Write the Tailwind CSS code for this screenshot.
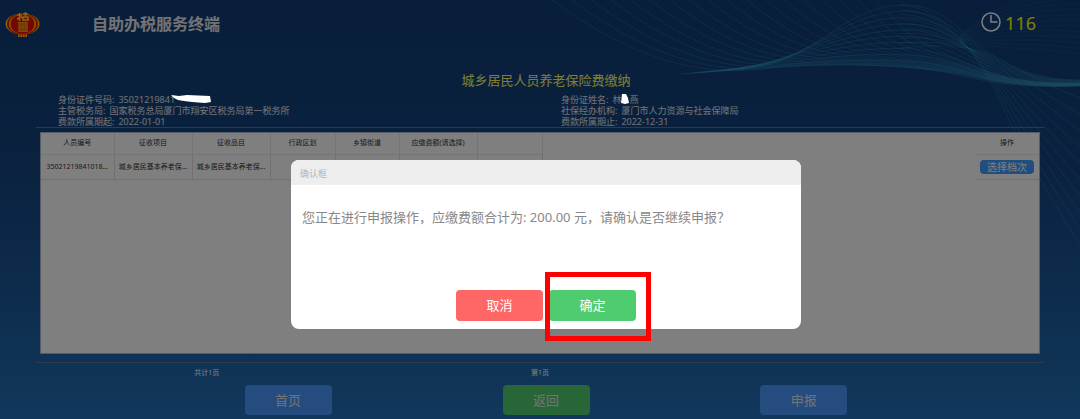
<!DOCTYPE html>
<html lang="zh-CN">
<head>
    <meta charset="UTF-8">
    <meta name="viewport" content="width=device-width, initial-scale=1.0">
    <title>自助办税服务终端</title>
    <script src="https://cdn.jsdelivr.net/npm/@tailwindcss/browser@4"></script>
</head>
<body class="relative min-h-screen flex flex-col overflow-x-hidden bg-linear-to-b from-[#103c76] via-[#15447f] via-40% to-[#2270b8] font-['Noto_Sans','Noto_Sans_CJK_SC',sans-serif] text-white">
    <!-- 背景波纹 -->
    <svg id="waves" class="absolute top-0 right-0 w-1/2" viewBox="540 0 540 260" fill="none" stroke="#3aa5cc" aria-hidden="true"></svg>

    <!-- 顶部标题栏 -->
    <header class="relative h-12 flex items-center pl-1 pr-11">
        <svg class="w-9 h-7 shrink-0" viewBox="0 0 36 28" aria-hidden="true">
            <path d="M14 22h9v5h-9z" fill="#ffd000"/>
            <path d="M16 22v5M18.500 22v5M21 22v5" stroke="#e02010"/>
            <ellipse cx="18.500" cy="14" rx="17" ry="10.500" fill="#ffc800"/>
            <ellipse cx="18.500" cy="14" rx="15.500" ry="10.500" fill="#f01010"/>
            <ellipse cx="18.500" cy="14" rx="13.500" ry="10" fill="#ffc800"/>
            <ellipse cx="18.500" cy="14" rx="12" ry="10" fill="#f00c0c"/>
            <path d="M13 5h5M15.500 3v8M13 9l5-2M19 4h5M21.500 2v4M19 7h5v3h-5z" stroke="#ffe020" stroke-width="1.500" fill="none"/>
            <path d="M14 12h10v10H14z" fill="#e87010"/>
            <path d="M14 12.500h10M14 17h10M14 21.500h10M16 12v10M19 12v10M22 12v10" stroke="#ff9a10" stroke-width=".8"/>
        </svg>
        <h1 class="ml-[52px] text-base font-bold text-gray-200">自助办税服务终端</h1>
        <div class="ml-auto flex items-center gap-1 text-lg leading-6 text-[#ffff00]">
            <svg class="w-5 h-5 mb-1" viewBox="0 0 20 20" fill="none" stroke="#fff" stroke-width="1.500" aria-hidden="true">
                <circle cx="10" cy="10" r="9"/>
                <path d="M10 3v7h6.500"/>
            </svg>
            <span id="timer" class="mb-[2px]">116</span>
        </div>
    </header>

    <h2 class="relative mt-5 pl-3 text-center text-[13px] leading-6 text-[#ffff66]">城乡居民人员养老保险费缴纳</h2>

    <!-- 缴费人信息 -->
    <section class="relative mt-[2px] grid grid-cols-2 pl-[58px] pr-4 text-[9px] leading-[11px] text-gray-200">
        <div class="flex gap-1"><span>身份证件号码:</span>
            <span class="flex">35021219841<svg class="relative z-20 -ml-1 w-10 h-[11px]" viewBox="0 0 40 11" fill="#fff" aria-hidden="true"><path d="M0 1l8 1 8-1 23 1 1 6-6 1-13-1-8-1-6-1-4-2z"/></svg></span>
        </div>
        <div class="flex gap-1"><span>身份证姓名:</span>
            <span class="flex">林<svg class="relative z-20 w-2 h-[11px]" viewBox="0 0 8 11" fill="#fff" aria-hidden="true"><path d="M1 0l4 0 2 4 1 5-4 1-4-1z"/></svg>燕</span>
        </div>
        <div class="flex gap-1"><span>主管税务局:</span><span>国家税务总局厦门市翔安区税务局第一税务所</span></div>
        <div class="flex gap-1"><span>社保经办机构:</span><span>厦门市人力资源与社会保障局</span></div>
        <div class="flex gap-1"><span>费款所属期起:</span><span>2022-01-01</span></div>
        <div class="flex gap-1"><span>费款所属期止:</span><span>2022-12-31</span></div>
    </section>

    <!-- 征收明细 -->
    <main class="relative flex-1 flex flex-col mx-9 px-1 pt-1 pb-2 border-y border-[#5f7396]">
        <div class="flex-1 bg-white border border-[#a9b8cc]">
            <table class="w-full table-fixed border-collapse text-[7px] leading-3 text-center text-[#303133]">
                <colgroup>
                    <col class="w-[73px]"><col class="w-[78px]"><col class="w-[78px]"><col class="w-[65px]"><col class="w-[64px]"><col class="w-[78px]"><col class="w-[65px]"><col><col class="w-[64px]">
                </colgroup>
                <thead>
                    <tr class="h-[21px]">
                        <th class="font-normal border-r border-b border-[#e8e8e8]">人员编号</th>
                        <th class="font-normal border-r border-b border-[#e8e8e8]">征收项目</th>
                        <th class="font-normal border-r border-b border-[#e8e8e8]">征收品目</th>
                        <th class="font-normal border-r border-b border-[#e8e8e8]">行政区划</th>
                        <th class="font-normal border-r border-b border-[#e8e8e8]">乡镇街道</th>
                        <th class="font-normal border-r border-b border-[#e8e8e8]">应缴费额(请选择)</th>
                        <th class="border-r border-b border-[#e8e8e8]"></th>
                        <th></th>
                        <th class="font-normal border-b border-[#e8e8e8]">操作</th>
                    </tr>
                </thead>
                <tbody>
                    <tr class="h-[25px]">
                        <td class="border-r border-b border-[#e0e0e0]">35021219841018...</td>
                        <td class="border-r border-b border-[#e0e0e0]">城乡居民基本养老保...</td>
                        <td class="border-r border-b border-[#e0e0e0]">城乡居民基本养老保...</td>
                        <td class="border-r border-b border-[#e0e0e0]"></td>
                        <td class="border-r border-b border-[#e0e0e0]"></td>
                        <td class="border-r border-b border-[#e0e0e0]"></td>
                        <td class="border-r border-b border-[#e0e0e0]"></td>
                        <td></td>
                        <td class="border-b border-[#e0e0e0]">
                            <button class="block mx-auto w-[54px] rounded-sm bg-[#409eff] text-[10px] leading-[14px] text-white">选择档次</button>
                        </td>
                    </tr>
                </tbody>
            </table>
        </div>
    </main>

    <!-- 分页与底部按钮 -->
    <footer class="relative pt-1 pb-1">
        <div class="mx-10 grid grid-cols-3 text-center text-[7px] leading-3">
            <span>共计1页</span>
            <span>第1页</span>
        </div>
        <div class="mt-[6px] pl-3 flex justify-center gap-[16%] text-[13px] leading-[30px] text-gray-200">
            <button class="w-[87px] rounded bg-[#4a98ff]">首页</button>
            <button class="w-[87px] rounded bg-[#50cc70]">返回</button>
            <button class="w-[87px] rounded bg-[#4a98ff]">申报</button>
        </div>
    </footer>

    <!-- 确认弹窗 -->
    <div class="fixed inset-0 z-10 flex items-start justify-center pt-40 pl-3 bg-black/50">
        <div role="dialog" aria-labelledby="dialog-title" class="w-[510px] max-w-full rounded-lg bg-white">
            <h3 id="dialog-title" class="rounded-t-lg bg-[#eeeeee] px-[9px] pt-[3px] text-[9px] leading-[22px] text-[#b4b4b4]">确认框</h3>
            <p class="px-[11px] pt-[22px] text-[13px] leading-5 text-[#888888]">您正在进行申报操作，应缴费额合计为: 200.00 元，请确认是否继续申报？</p>
            <div class="flex justify-center gap-[6px] pt-[63px] pb-2 text-[13px] leading-[31px] text-white">
                <button class="w-[87px] rounded bg-[#ff6666]">取消</button>
                <div class="relative">
                    <button class="w-[87px] rounded bg-[#50cc70]">确定</button>
                    <span class="absolute -left-1 -top-[18px] w-[106px] h-[69px] border-5 border-[#ff0000] pointer-events-none"></span>
                </div>
            </div>
        </div>
    </div>

    <script>
        // 每组波纹由首尾两条曲线插值得到: [起点, 控制点..., 终点]
        const groups = [
            { n: 18, o: 0.25, a: [552, 0, 620, 50, 690, 80, 770, 68, 830, 62, 900, 64, 960, 74, 1000, 84, 1040, 88, 1080, 86], b: [860, -20, 880, 5, 900, 30, 925, 44, 945, 55, 965, 62, 985, 70, 1010, 80, 1040, 84, 1080, 83] },
            { n: 11, o: 0.28, a: [740, 70, 820, 62, 840, 5, 905, 5, 945, 5, 965, 38, 990, 54, 1015, 70, 1040, 80, 1080, 80], b: [680, 74, 770, 66, 840, 62, 920, 68, 950, 72, 975, 80, 1000, 83, 1030, 87, 1050, 86, 1080, 85] },
            { n: 10, o: 0.25, a: [900, 5, 940, 5, 975, 50, 1000, 100, 1015, 135, 1045, 190, 1080, 245], b: [900, 48, 940, 44, 975, 44, 1005, 62, 1030, 76, 1055, 88, 1080, 98] },
            { n: 12, o: 0.12, a: [960, 36, 985, 10, 1010, 5, 1030, 0, 1050, -5, 1065, -6, 1080, -8], b: [960, 42, 985, 46, 1010, 48, 1030, 49, 1050, 50, 1065, 52, 1080, 54] }
        ];
        const svg = document.getElementById('waves');
        groups.forEach(g => {
            for (let i = 0; i < g.n; i++) {
                const t = i / (g.n - 1);
                const p = g.a.map((v, k) => v + (g.b[k] - v) * t);
                const path = document.createElementNS('http://www.w3.org/2000/svg', 'path');
                path.setAttribute('d', `M${p.slice(0, 2)}C${p.slice(2)}`);
                path.setAttribute('stroke-opacity', g.o);
                svg.appendChild(path);
            }
        });
    </script>
</body>
</html>
